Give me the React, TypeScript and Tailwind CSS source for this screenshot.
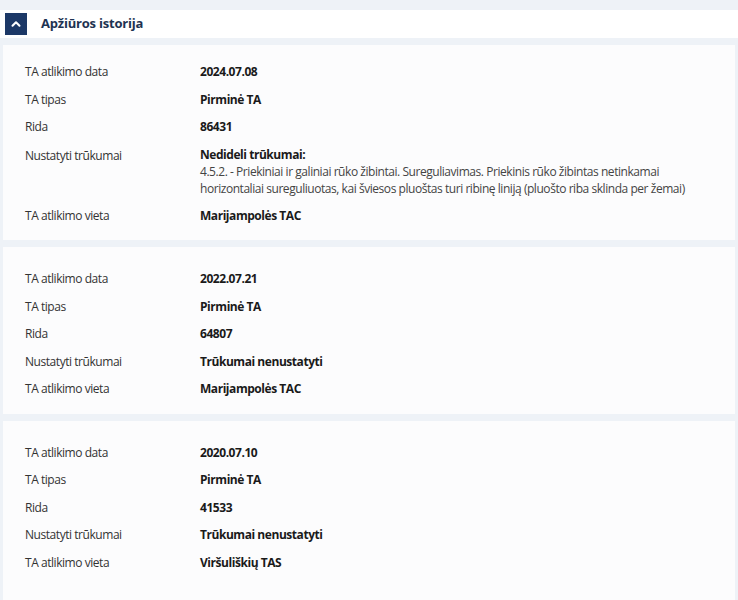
import { ChevronUp } from "lucide-react";

type Row = { label: string; value: string; note?: string[] };

const inspections: { rows: Row[]; pad: string }[] = [
  {
    pad: "pt-[13px] pb-[11px]",
    rows: [
      { label: "TA atlikimo data", value: "2024.07.08" },
      { label: "TA tipas", value: "Pirminė TA" },
      { label: "Rida", value: "86431" },
      {
        label: "Nustatyti trūkumai",
        value: "Nedideli trūkumai:",
        note: [
          "4.5.2. - Priekiniai ir galiniai rūko žibintai. Sureguliavimas. Priekinis rūko žibintas netinkamai horizontaliai sureguliuotas, kai šviesos pluoštas turi ribinę liniją (pluošto riba sklinda per žemai)",
        ],
      },
      { label: "TA atlikimo vieta", value: "Marijampolės TAC" },
    ],
  },
  {
    pad: "pt-[18px] pb-[11px]",
    rows: [
      { label: "TA atlikimo data", value: "2022.07.21" },
      { label: "TA tipas", value: "Pirminė TA" },
      { label: "Rida", value: "64807" },
      { label: "Nustatyti trūkumai", value: "Trūkumai nenustatyti" },
      { label: "TA atlikimo vieta", value: "Marijampolės TAC" },
    ],
  },
  {
    pad: "pt-[18px] pb-[11px] h-[200px]",
    rows: [
      { label: "TA atlikimo data", value: "2020.07.10" },
      { label: "TA tipas", value: "Pirminė TA" },
      { label: "Rida", value: "41533" },
      { label: "Nustatyti trūkumai", value: "Trūkumai nenustatyti" },
      { label: "TA atlikimo vieta", value: "Viršuliškių TAS" },
    ],
  },
];

const InfoRow = ({ row }: { row: Row }) => {
  if (row.note) {
    return (
      <div className="flex py-[5px] leading-[17px]">
        <div className="w-[175px] shrink-0 pt-[1px] text-[#333]">{row.label}</div>
        <div className="w-[490px]">
          <div className="font-bold text-[#1a1a1a]">{row.value}</div>
          {row.note.map((n) => (
            <p key={n} className="text-[#444]">
              {n}
            </p>
          ))}
        </div>
      </div>
    );
  }
  return (
    <div className="flex py-[4px] leading-[19.5px]">
      <div className="w-[175px] shrink-0 text-[#333]">{row.label}</div>
      <div className="font-bold text-[#1a1a1a]">{row.value}</div>
    </div>
  );
};

export default function App() {
  return (
    <div
      className="h-[600px] w-[738px] overflow-hidden bg-[#eef2f7] pt-[10px] text-[12px] tracking-[-0.45px]"
      style={{ fontFamily: '"Open Sans", "Noto Sans", sans-serif' }}
    >
      {/* header */}
      <div className="flex h-[28px] items-center bg-white">
        <button className="ml-[5px] flex h-[22px] w-[22px] items-center justify-center bg-[#1c3866] text-white">
          <ChevronUp size={14} strokeWidth={3.5} />
        </button>
        <h3 className="ml-[14px] text-[13px] font-bold tracking-[-0.2px] text-[#1e3352]">
          Apžiūros istorija
        </h3>
      </div>

      <div className="mt-[7px] flex flex-col gap-[7px] px-[3px]">
        {inspections.map((item, i) => (
          <div key={i} className={`bg-[#fcfcfd] pl-[22px] ${item.pad}`}>
            {item.rows.map((row) => (
              <InfoRow key={row.label} row={row} />
            ))}
          </div>
        ))}
      </div>
    </div>
  );
}
